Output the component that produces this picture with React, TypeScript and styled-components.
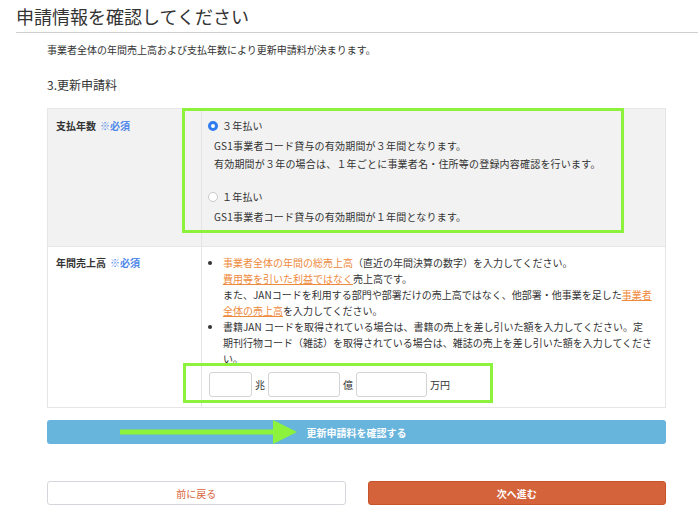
import React from 'react';
import styled, { createGlobalStyle } from 'styled-components';

const GlobalStyle = createGlobalStyle`
  * { box-sizing: border-box; }
  body {
    margin: 0;
    background: #fff;
    color: #333;
    font-family: "Noto Sans CJK JP", "Noto Sans", sans-serif;
  }
`;

const lime = '#8cf23c';

const Page = styled.div`
  width: 700px;
  height: 524px;
  overflow: hidden;
  padding: 3px 2px 0 16px;
`;

const Title = styled.h1`
  margin: 0;
  padding-bottom: 3px;
  font-size: 18px;
  line-height: 26px;
  font-weight: 400;
  color: #333;
  border-bottom: 1px solid #cfcfcf;
`;

const Content = styled.div`
  padding: 0 32px 0 31px;
`;

const Lead = styled.p`
  margin: 9px 0 0;
  font-size: 10px;
  line-height: 16px;
`;

const SectionTitle = styled.h2`
  margin: 18px 0 0;
  font-size: 12px;
  line-height: 18px;
  font-weight: 400;
`;

const TableWrap = styled.div`
  position: relative;
  margin-top: 14px;
`;

const FormTable = styled.div`
  border: 1px solid #e6e6e6;
  border-bottom: none;
`;

const Row = styled.div<{ $shaded?: boolean }>`
  display: grid;
  grid-template-columns: 154px 1fr;
  background: ${p => (p.$shaded ? '#f2f2f2' : '#fff')};
  border-bottom: 1px solid #e6e6e6;
`;

const Label = styled.div<{ $lh: number }>`
  padding: 8px 8px;
  font-size: 10px;
  line-height: ${p => p.$lh}px;
  font-weight: 700;
  border-right: 1px solid #e4e4e4;
`;

const Required = styled.span`
  margin-left: 4px;
  color: #4f88ea;
`;

const Value = styled.div<{ $pb: number; $spaced?: boolean }>`
  padding: 8px 10px ${p => p.$pb}px 6px;
  font-size: 10px;
  letter-spacing: ${p => (p.$spaced ? '0.2px' : 'normal')};
`;

const Option = styled.label<{ $first?: boolean }>`
  display: flex;
  align-items: center;
  gap: 4px;
  margin-top: ${p => (p.$first ? 0 : 15)}px;
  line-height: 18px;
`;

const Radio = styled.input.attrs({ type: 'radio' })`
  appearance: none;
  margin: 0;
  width: 10px;
  height: 10px;
  border-radius: 50%;
  border: 1px solid #c9c9c9;
  background: #fff;
  &:checked {
    border: 3px solid #2f7cf0;
    background: #fff;
  }
`;

const OptionText = styled.p`
  margin: 2px 0 0 6px;
  line-height: 18px;
`;

const Notes = styled.ul`
  margin: 0;
  padding-left: 15px;
  line-height: 16px;
  li::marker { font-size: 10px; }
`;

const Accent = styled.span<{ $link?: boolean }>`
  color: #ee8a3c;
  text-decoration: ${p => (p.$link ? 'underline' : 'none')};
`;

const AmountRow = styled.div`
  display: flex;
  align-items: center;
  gap: 3px;
  margin: 5px 0 0 1px;
`;

const AmountInput = styled.input<{ $w: number }>`
  width: ${p => p.$w}px;
  height: 25px;
  border: 1px solid #d3d3d3;
  border-radius: 3px;
  background: #fff;
  padding: 0 4px;
  font: inherit;
`;

const Unit = styled.span`
  font-size: 10px;
`;

const Highlight = styled.div<{ $l: number; $t: number; $w: number; $h: number }>`
  position: absolute;
  left: ${p => p.$l}px;
  top: ${p => p.$t}px;
  width: ${p => p.$w}px;
  height: ${p => p.$h}px;
  border: 3px solid ${lime};
  pointer-events: none;
`;

const ConfirmButton = styled.button`
  position: relative;
  display: block;
  width: 100%;
  height: 24px;
  margin-top: 12px;
  border: none;
  border-radius: 3px;
  background: #67b4dc;
  color: #fff;
  font: inherit;
  font-size: 10px;
  font-weight: 700;
`;

const Arrow = styled.svg`
  position: absolute;
  left: 73px;
  top: 0;
`;

const Footer = styled.div`
  display: grid;
  grid-template-columns: 1fr 1fr;
  gap: 22px;
  margin-top: 37px;
`;

const NavButton = styled.button<{ $primary?: boolean }>`
  height: 24px;
  border-radius: 3px;
  border: 1px solid ${p => (p.$primary ? '#c9532b' : '#d3d6da')};
  background: ${p => (p.$primary ? '#d4623a' : '#fff')};
  color: ${p => (p.$primary ? '#fff' : '#d9653b')};
  font: inherit;
  font-size: 10px;
  font-weight: ${p => (p.$primary ? 700 : 400)};
`;

export default function App() {
  return (
    <Page>
      <GlobalStyle />
      <Title>申請情報を確認してください</Title>
      <Content>
        <Lead>事業者全体の年間売上高および支払年数により更新申請料が決まります。</Lead>
        <SectionTitle>3.更新申請料</SectionTitle>

        <TableWrap>
          <FormTable>
            <Row $shaded>
              <Label $lh={18}>
                支払年数<Required>※必須</Required>
              </Label>
              <Value $pb={20} $spaced>
                <Option $first>
                  <Radio name="term" defaultChecked />３年払い
                </Option>
                <OptionText>
                  GS1事業者コード貸与の有効期間が３年間となります。
                  <br />
                  有効期間が３年の場合は、１年ごとに事業者名・住所等の登録内容確認を行います。
                </OptionText>
                <Option>
                  <Radio name="term" />１年払い
                </Option>
                <OptionText>GS1事業者コード貸与の有効期間が１年間となります。</OptionText>
              </Value>
            </Row>
            <Row>
              <Label $lh={16}>
                年間売上高<Required>※必須</Required>
              </Label>
              <Value $pb={10}>
                <Notes>
                  <li>
                    <Accent>事業者全体の年間の総売上高</Accent>（直近の年間決算の数字）を入力してください。
                    <br />
                    <Accent $link>費用等を引いた利益ではなく</Accent>売上高です。
                    <br />
                    また、JANコードを利用する部門や部署だけの売上高ではなく、他部署・他事業を足した
                    <Accent $link>事業者全体の売上高</Accent>を入力してください。
                  </li>
                  <li>
                    書籍JAN コードを取得されている場合は、書籍の売上を差し引いた額を入力してください。定
                    <br />
                    期刊行物コード（雑誌）を取得されている場合は、雑誌の売上を差し引いた額を入力してください。
                  </li>
                </Notes>
                <AmountRow>
                  <AmountInput $w={43} />
                  <Unit>兆</Unit>
                  <AmountInput $w={72} />
                  <Unit>億</Unit>
                  <AmountInput $w={71} />
                  <Unit>万円</Unit>
                </AmountRow>
              </Value>
            </Row>
          </FormTable>
          <Highlight $l={135} $t={0} $w={442} $h={125} />
          <Highlight $l={136} $t={255} $w={310} $h={40} />
        </TableWrap>

        <ConfirmButton>
          <Arrow width="177" height="24" viewBox="0 0 177 24">
            <rect x="0" y="9.5" width="156" height="5" fill={lime} />
            <polygon points="153,0 177,12 153,24" fill={lime} />
          </Arrow>
          更新申請料を確認する
        </ConfirmButton>

        <Footer>
          <NavButton>前に戻る</NavButton>
          <NavButton $primary>次へ進む</NavButton>
        </Footer>
      </Content>
    </Page>
  );
}
